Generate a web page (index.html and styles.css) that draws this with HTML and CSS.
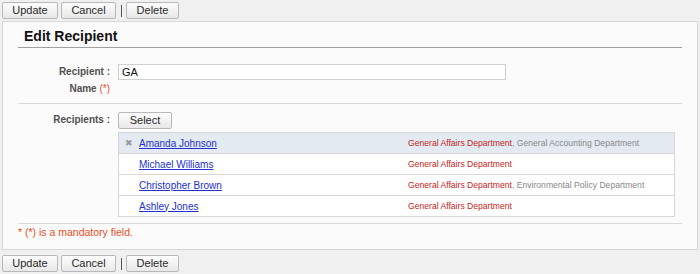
FILE: index.html
```html
<!DOCTYPE html>
<html lang="en">
<head>
    <meta charset="UTF-8">
    <title>Edit Recipient</title>
    <link rel="stylesheet" href="styles.css">
</head>
<body>
    <div class="toolbar">
        <button class="btn">Update</button>
        <button class="btn">Cancel</button>
        <span class="sep"></span>
        <button class="btn">Delete</button>
    </div>

    <div class="panel">
        <h2>Edit Recipient</h2>

        <div class="form-row">
            <div class="label">Recipient&nbsp;:<br>Name <span class="req">(*)</span></div>
            <div class="field">
                <input type="text" class="text-input" value="GA">
            </div>
        </div>

        <div class="form-row recipients">
            <div class="label">Recipients&nbsp;:</div>
            <div class="field">
                <button class="btn select-btn">Select</button>
                <table class="recipient-table">
                    <tr class="selected">
                        <td class="remove">&#x2716;</td>
                        <td class="name"><a href="#">Amanda Johnson</a></td>
                        <td class="dept"><span class="main">General Affairs Department</span>, General Accounting Department</td>
                    </tr>
                    <tr>
                        <td class="remove"></td>
                        <td class="name"><a href="#">Michael Williams</a></td>
                        <td class="dept"><span class="main">General Affairs Department</span></td>
                    </tr>
                    <tr>
                        <td class="remove"></td>
                        <td class="name"><a href="#">Christopher Brown</a></td>
                        <td class="dept"><span class="main">General Affairs Department</span>, Environmental Policy Department</td>
                    </tr>
                    <tr>
                        <td class="remove"></td>
                        <td class="name"><a href="#">Ashley Jones</a></td>
                        <td class="dept"><span class="main">General Affairs Department</span></td>
                    </tr>
                </table>
            </div>
        </div>

        <p class="note">* (*) is a mandatory field.</p>
    </div>

    <div class="toolbar">
        <button class="btn">Update</button>
        <button class="btn">Cancel</button>
        <span class="sep"></span>
        <button class="btn">Delete</button>
    </div>
</body>
</html>
```

FILE: styles.css
```css
body {
    margin: 0;
    padding: 2px;
    background: #f0f0f0;
    font-family: "Liberation Sans", Arial, sans-serif;
    font-size: 11px;
    color: #222;
}
.toolbar {
    display: flex;
    align-items: center;
    height: 17px;
}
.btn {
    height: 17px;
    padding: 0 6px;
    margin-right: 3px;
    font-family: inherit;
    font-size: 11px;
    color: #2a2a2a;
    background: linear-gradient(#fdfdfd, #e8e8e8);
    border: 1px solid #b8b8b8;
    border-radius: 2px;
    line-height: 15px;
}
.toolbar .btn:nth-child(1) { width: 56px; }
.toolbar .btn:nth-child(2) { width: 55px; }
.toolbar .btn:nth-child(4) { width: 53px; }
.sep {
    width: 1px;
    height: 12px;
    background: #555;
    margin: 0 4px 0 2px;
}
.panel {
    margin: 2px 0 5px;
    background: #fbfbfb;
    border: 1px solid #d6d6d6;
    padding: 0 15px 10px;
}
.panel h2 {
    margin: 0;
    padding: 6px 0 2px 6px;
    font-size: 14px;
    line-height: 17px;
    color: #111;
    border-bottom: 1px solid #a0a0a0;
}
.form-row {
    display: flex;
    gap: 8px;
    padding: 15px 0 6px;
    border-bottom: 1px solid #d8d8d8;
}
.form-row.recipients {
    padding: 8px 0 6px;
}
.label {
    width: 92px;
    text-align: right;
    color: #505050;
    font-weight: bold;
    font-size: 10px;
    line-height: 17px;
}
.recipients .label {
    line-height: 15px;
}
.req {
    color: #e8501e;
    font-weight: normal;
}
.text-input {
    display: block;
    box-sizing: border-box;
    width: 388px;
    height: 16px;
    margin: 1px 0 0;
    padding: 0 3px;
    font-family: inherit;
    font-size: 11px;
    color: #111;
    border: 1px solid #d0d0d0;
    background: #fff;
}
.select-btn {
    width: 54px;
    margin: 0;
    display: block;
}
.recipient-table {
    margin-top: 3px;
    width: 557px;
    table-layout: fixed;
    border-collapse: collapse;
    border: 1px solid #d6d6d6;
    background: #fff;
}
.recipient-table td {
    height: 20px;
    padding: 0;
    border-top: 1px solid #d6d6d6;
    white-space: nowrap;
    overflow: hidden;
}
.recipient-table tr.selected td {
    background: #e3eaf2;
}
.remove {
    width: 20px;
    text-align: center;
    color: #999;
    font-size: 9px;
}
.name {
    width: 269px;
    font-size: 10px;
}
.name a {
    color: #2230d0;
}
.dept {
    font-size: 8.6px;
    color: #888;
}
.dept .main {
    color: #c4241a;
}
.note {
    margin: 2px 0 0;
    font-size: 10.5px;
    line-height: 13px;
    color: #e8501e;
}
```
